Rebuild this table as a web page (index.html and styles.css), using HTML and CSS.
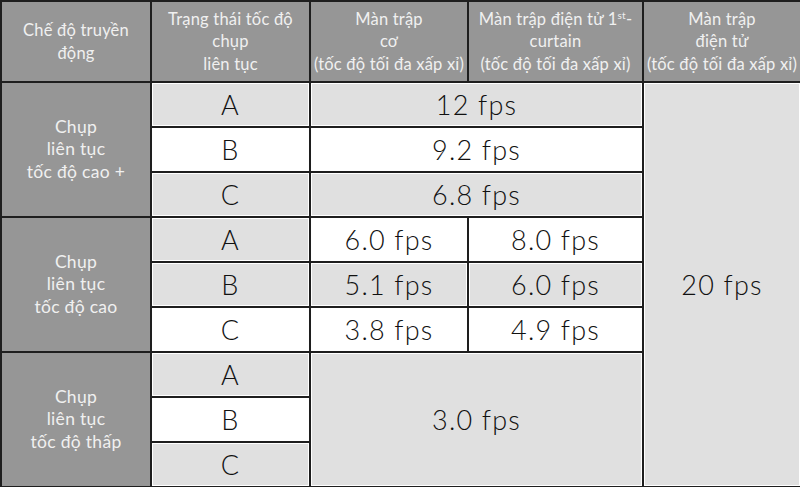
FILE: index.html
```html
<!DOCTYPE html>
<html lang="vi">
<head>
<meta charset="utf-8">
<title>Chế độ truyền động</title>
<link rel="stylesheet" href="styles.css">
</head>
<body>
<table class="spec">
  <colgroup>
    <col class="c1"><col class="c2"><col class="c3"><col class="c4"><col class="c5">
  </colgroup>
  <thead>
    <tr class="head">
      <th class="hd">Chế độ truyền<br>động</th>
      <th class="hd">Trạng thái tốc độ<br>chụp<br>liên tục</th>
      <th class="hd">Màn trập<br>cơ<br>(tốc độ tối đa xấp xỉ)</th>
      <th class="hd">Màn trập điện tử 1<sup>st</sup>-<br>curtain<br>(tốc độ tối đa xấp xỉ)</th>
      <th class="hd">Màn trập<br>điện tử<br>(tốc độ tối đa xấp xỉ)</th>
    </tr>
  </thead>
  <tbody>
    <tr>
      <th class="grp" rowspan="3">Chụp<br>liên tục<br>tốc độ cao +</th>
      <td class="lt">A</td>
      <td class="lt" colspan="2">12 fps</td>
      <td class="lt" rowspan="9">20 fps</td>
    </tr>
    <tr>
      <td class="wh">B</td>
      <td class="wh" colspan="2">9.2 fps</td>
    </tr>
    <tr>
      <td class="lt">C</td>
      <td class="lt" colspan="2">6.8 fps</td>
    </tr>
    <tr>
      <th class="grp" rowspan="3">Chụp<br>liên tục<br>tốc độ cao</th>
      <td class="lt">A</td>
      <td class="wh">6.0 fps</td>
      <td class="wh">8.0 fps</td>
    </tr>
    <tr>
      <td class="lt">B</td>
      <td class="lt">5.1 fps</td>
      <td class="lt">6.0 fps</td>
    </tr>
    <tr>
      <td class="wh">C</td>
      <td class="wh">3.8 fps</td>
      <td class="wh">4.9 fps</td>
    </tr>
    <tr>
      <th class="grp" rowspan="3">Chụp<br>liên tục<br>tốc độ thấp</th>
      <td class="lt">A</td>
      <td class="lt" colspan="2" rowspan="3">3.0 fps</td>
    </tr>
    <tr>
      <td class="wh">B</td>
    </tr>
    <tr>
      <td class="lt">C</td>
    </tr>
  </tbody>
</table>
</body>
</html>
```
FILE: styles.css
```css
html, body {
  margin: 0;
  padding: 0;
  background: #ffffff;
}

.spec {
  width: 800px;
  height: 487px;
  table-layout: fixed;
  border-collapse: collapse;
  border: 2px solid #1e1e1e;
  font-family: Lato, "Open Sans", "Noto Sans", sans-serif;
}

.c1 { width: 150px; }
.c2 { width: 159px; }
.c3 { width: 158px; }
.c4 { width: 175px; }
.c5 { width: 158px; }

.spec th,
.spec td {
  border: 2px solid #1e1e1e;
  padding: 0;
  text-align: center;
  vertical-align: middle;
}

.head { height: 81px; }
.spec tbody tr { height: 45px; }

.hd {
  background: #969696;
  color: #f0f0f0;
  font-weight: 400;
  font-size: 16.5px;
  line-height: 22.5px;
  letter-spacing: 0.2px;
  white-space: nowrap;
}

.hd sup {
  font-size: 10px;
  line-height: 0;
  vertical-align: 6px;
}

.grp {
  background: #969696;
  color: #f0f0f0;
  font-weight: 400;
  font-size: 17.5px;
  line-height: 22.5px;
  letter-spacing: 0.3px;
}

.spec td {
  color: #111111;
  font-size: 27px;
  font-weight: 300;
  line-height: 30px;
  letter-spacing: 1.2px;
}

.lt {
  background: #e0e0e0;
  box-shadow: inset 0 0 0 1px #ffffff;
}

.wh {
  background: #ffffff;
}
```
